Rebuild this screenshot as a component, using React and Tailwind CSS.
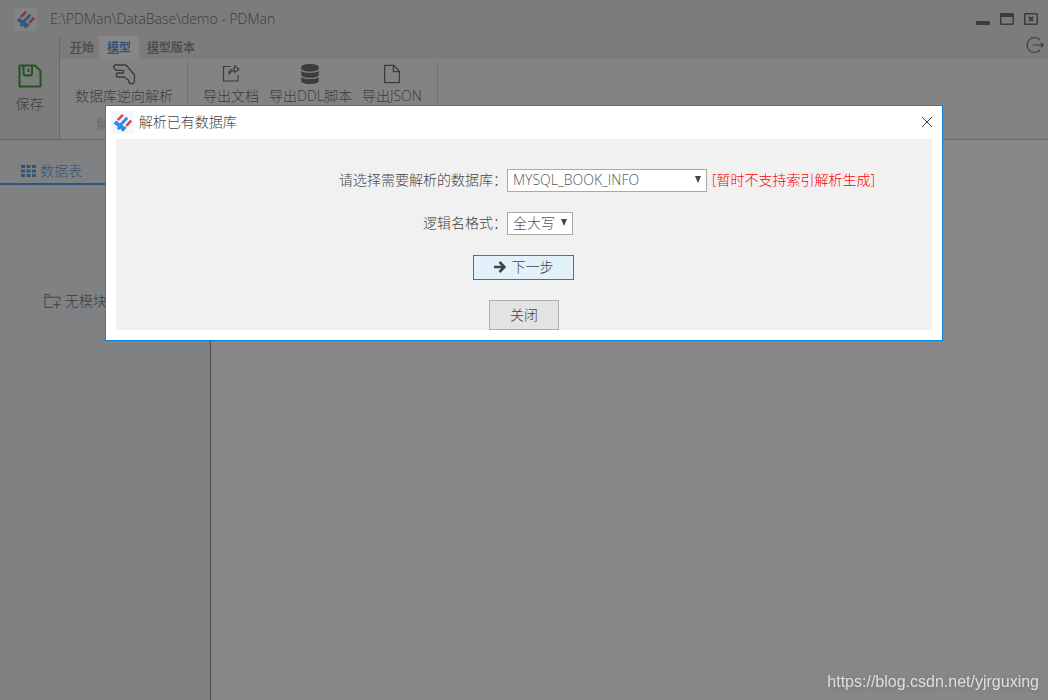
import React from 'react';
import { FaDatabase } from 'react-icons/fa';

function Logo() {
  return (
    <span className="flex size-[23px] shrink-0 items-center justify-center rounded-sm bg-[#f3f6fb]">
      <svg viewBox="0 0 24 24" className="size-[23px]" fill="none" aria-hidden="true">
        <g stroke="#2b8de6">
          <path d="M4 11.500L14.500 19.500" strokeWidth="4.200" />
          <path d="M9 15.500L17 7" strokeWidth="3" />
          <path d="M7 19L10 15.500" strokeWidth="3" />
          <path d="M11 20.500L15.500 16.500" strokeWidth="2.500" />
        </g>
        <g stroke="#e0474f" strokeWidth="2.800">
          <path d="M7 9.500L12.500 4" />
          <path d="M16 15.500L21 10" />
        </g>
      </svg>
    </span>
  );
}

function Icon({ className, children }) {
  return (
    <svg viewBox="0 0 24 24" className={className} fill="none" stroke="currentColor" aria-hidden="true">
      {children}
    </svg>
  );
}

function RibbonButton({ icon, label }) {
  return (
    <button type="button" className="flex flex-col items-center">
      <span className="flex h-6 items-center justify-center">{icon}</span>
      <span className="leading-5">{label}</span>
    </button>
  );
}

function Select({ id, className, children }) {
  return (
    <span className={`relative inline-flex ${className}`}>
      <select
        id={id}
        className="h-[23px] w-full appearance-none border border-[#a9a9a9] bg-white pl-[5px] pr-4 leading-5 text-[#555] outline-none"
      >
        {children}
      </select>
      <svg viewBox="0 0 6 7" className="pointer-events-none absolute right-[6px] top-[7px] h-[7px] w-[6px]" aria-hidden="true">
        <path d="M0 0H6L3 7Z" fill="#444" />
      </svg>
    </span>
  );
}

function TitleBar() {
  return (
    <header className="flex h-9 items-center justify-between bg-[#e3e3e3] pl-[14px] pr-[10px] pt-0.5">
      <div className="flex items-center gap-[13px]">
        <Logo />
        <span>E:\PDMan\DataBase\demo - PDMan</span>
      </div>
      <div className="flex items-center gap-[10px]">
        <button type="button" aria-label="最小化">
          <svg viewBox="0 0 14 12" className="h-3 w-[14px]" aria-hidden="true">
            <rect y="8" width="14" height="4" rx="1" fill="currentColor" />
          </svg>
        </button>
        <button type="button" aria-label="最大化">
          <svg viewBox="0 0 14 12" className="h-3 w-[14px]" aria-hidden="true">
            <path d="M1 0H13L14 1V11L13 12H1L0 11V1ZM1.500 4V10.500H12.500V4Z" fill="currentColor" fillRule="evenodd" />
          </svg>
        </button>
        <button type="button" aria-label="关闭窗口">
          <svg viewBox="0 0 14 12" className="h-3 w-[14px]" fill="none" stroke="currentColor" aria-hidden="true">
            <rect x=".75" y=".75" width="12.500" height="10.500" rx=".5" strokeWidth="1.500" />
            <path d="M5 4L9 8M9 4L5 8" strokeWidth="1.800" />
          </svg>
        </button>
      </div>
    </header>
  );
}

function Ribbon() {
  return (
    <section className="flex h-[104px] border-b border-[#aab0b8] bg-[#e3e3e3]">
      <button type="button" className="flex w-[60px] flex-col items-center border-r border-[#b4b4b4] pt-[28px]">
        <svg viewBox="0 0 24 24" className="size-6" fill="none" stroke="#008000" strokeWidth="2" aria-hidden="true">
          <path d="M2 1.500H17L22.500 7V22.500H1.500V2Z" strokeLinejoin="round" />
          <path d="M5.500 2V9.500Q5.500 11.500 8 11.500H11.500Q14 11.500 14 9.500V2" />
          <path d="M10.500 4.500V8" />
        </svg>
        <span className="mt-1.5 leading-5">保存</span>
      </button>
      <div className="flex min-w-0 grow flex-col">
        <div className="flex h-[23px] items-start justify-between">
          <nav className="flex h-full text-[12px] font-bold">
            <a href="#start" className="flex items-center pl-[10px] pr-[5px] text-[#777]"><span><u>开</u>始</span></a>
            <a href="#model" className="flex items-center bg-white px-2 text-[#2f80dd]"><span><u>模</u>型</span></a>
            <a href="#version" className="flex items-center px-2 text-[#777]"><span><u>模</u>型版本</span></a>
          </nav>
          <button type="button" aria-label="退出" className="mr-1">
            <Icon className="size-[18px]">
              <path d="M19 5.500A10 10 0 1 0 19 18.500M9 12H23M20 9L23 12L20 15" strokeWidth="1.500" />
            </Icon>
          </button>
        </div>
        <div className="flex grow bg-[#f5f5f5] pt-[3px]">
          <div className="flex flex-col items-center border-r border-[#c4c4c4] pl-[15px] pr-[14px]">
            <RibbonButton
              label="数据库逆向解析"
              icon={
                <Icon className="size-6">
                  <path d="M2.500 3H13Q14.200 3 15 4L22.500 13V20L21 21.500H17.500L16.300 18L12.300 15H5Q3.500 13 5 11H11.500V8.300H4L1.500 5Q1.500 3.300 2.500 3Z" strokeWidth="1.300" strokeLinejoin="round" />
                </Icon>
              }
            />
            <span className="mt-2 leading-5 text-[#aaa]">解析导入</span>
          </div>
          <div className="flex items-start gap-[10px] border-r border-[#c4c4c4] pl-[15px] pr-[15px]">
            <RibbonButton
              label="导出文档"
              icon={
                <svg viewBox="0 0 18 20" className="h-5 w-[18px]" fill="none" stroke="currentColor" strokeWidth="1.200" aria-hidden="true">
                  <path d="M8.500 2.500H1.500V17H16V11" />
                  <path d="M7 10.500Q7 4.500 12.500 4.500V1.800L17 5.200L12.500 8.500V6.300Q9 6.300 7 10.500Z" strokeLinejoin="round" />
                </svg>
              }
            />
            <RibbonButton label="导出DDL脚本" icon={<FaDatabase className="size-5" />} />
            <RibbonButton
              label="导出JSON"
              icon={
                <Icon className="size-[22px]">
                  <path d="M4 2.500H14L20 9V21.500H4ZM13.500 2.500V9.500H20" strokeWidth="1.400" />
                </Icon>
              }
            />
          </div>
        </div>
      </div>
    </section>
  );
}

function Sidebar() {
  return (
    <aside className="w-[211px] shrink-0 border-r border-[#777] bg-[#edf1f4]">
      <a href="#tables" className="mt-[18px] flex h-[27px] items-center gap-1 border-b-2 border-[#2f80dd] pl-[21px] text-[#2f80dd]">
        <svg viewBox="0 0 15 12" className="h-3 w-[15px]" fill="currentColor" aria-hidden="true">
          <path d="M0 0H4V3H0ZM5.500 0H9.500V3H5.500ZM11 0H15V3H11ZM0 4.500H4V7.500H0ZM5.500 4.500H9.500V7.500H5.500ZM11 4.500H15V7.500H11ZM0 9H4V12H0ZM5.500 9H9.500V12H5.500ZM11 9H15V12H11Z" />
        </svg>
        <span>数据表</span>
      </a>
      <div className="mt-[106px] flex items-center gap-1 pl-[43px]">
        <Icon className="size-[18px]">
          <path d="M13 20.500H2.500V3.500H8L10 7H22.500V12M2.500 7H10M18.500 12V22M13.500 17H23.500" strokeWidth="1.200" />
        </Icon>
        <span>无模块</span>
      </div>
    </aside>
  );
}

function ParseDialog() {
  return (
    <div role="dialog" aria-labelledby="dialog-title" className="w-4/5 border border-[#0a84dd] bg-white px-[10px] pb-[10px] text-[#444]">
      <div className="-mx-[5px] flex h-[33px] items-center justify-between">
        <div className="flex items-center gap-[5px]">
          <Logo />
          <h1 id="dialog-title">解析已有数据库</h1>
        </div>
        <button type="button" aria-label="关闭对话框" className="mr-1">
          <svg viewBox="0 0 12 12" className="size-3" fill="none" stroke="#444" aria-hidden="true">
            <path d="M1 1L11 11M11 1L1 11" strokeWidth="1" />
          </svg>
        </button>
      </div>
      <form className="flex flex-col items-center gap-5 bg-[#f1f1f1] pt-[30px]">
        <div className="flex w-full items-center">
          <label htmlFor="database" className="w-[calc(50%-17px)] shrink-0 text-right">请选择需要解析的数据库：</label>
          <Select id="database" className="w-[200px]">
            <option>MYSQL_BOOK_INFO</option>
          </Select>
          <span className="ml-[5px] text-[#ff0000]">[暂时不支持索引解析生成]</span>
        </div>
        <div className="flex w-full items-center">
          <label htmlFor="format" className="w-[calc(50%-17px)] shrink-0 text-right">逻辑名格式：</label>
          <Select id="format" className="w-[66px]">
            <option>全大写</option>
          </Select>
        </div>
        <button type="button" className="flex h-[25px] items-center gap-[5px] border border-[#0a84dd] bg-[#e3f1fb] px-5">
          <svg viewBox="0 0 12 12" className="size-3" fill="none" stroke="currentColor" strokeWidth="2.600" aria-hidden="true">
            <path d="M0 6H10M5.500 1L10.500 6L5.500 11" />
          </svg>
          <span>下一步</span>
        </button>
        <button type="button" className="h-[30px] border border-[#aeaeae] bg-[#e3e3e3] px-5">关闭</button>
      </form>
    </div>
  );
}

export default function App() {
  return (
    <div className="flex min-h-screen flex-col bg-white font-['Open_Sans','Noto_Sans_CJK_SC',sans-serif] text-[14px] font-light leading-5 text-[#444]">
      <TitleBar />
      <Ribbon />
      <main className="flex grow">
        <Sidebar />
        <div className="grow" />
      </main>
      <div className="fixed inset-0 flex items-start justify-center bg-[#373737]/60 pt-[10%]">
        <ParseDialog />
      </div>
      <span className="fixed bottom-1.5 right-[9px] font-['Liberation_Sans',sans-serif] text-[16px] font-normal leading-6 text-[#dedede] drop-shadow-sm">
        https://blog.csdn.net/yjrguxing
      </span>
    </div>
  );
}
